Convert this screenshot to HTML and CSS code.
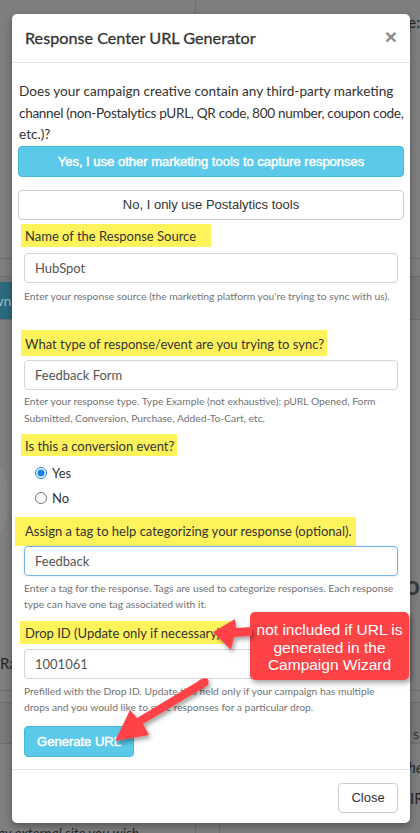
FILE: index.html
```html
<!DOCTYPE html>
<html lang="en">
<head>
<meta charset="utf-8">
<title>Response Center URL Generator</title>
<link rel="stylesheet" href="styles.css">
</head>
<body>
<div class="page">
  <div class="bg-row bg-r1">
    <div class="bg-col-left"></div>
    <div class="bg-col-right"><span class="bg-re">Re:</span></div>
  </div>
  <div class="bg-row bg-r2"></div>
  <div class="bg-row bg-r3"><span class="bg-btn">Down</span></div>
  <div class="bg-row bg-r4">
    <div class="bg-circle"></div>
    <div class="bg-o">o</div>
  </div>
  <div class="bg-row bg-r5"><span class="bg-ra">Ra</span></div>
  <div class="bg-row bg-r7"><span class="bg-s">s</span></div>
  <div class="bg-row bg-r8"><span class="bg-he">he</span></div>
  <div class="bg-row bg-r9"><span class="bg-ir">IR</span></div>
  <div class="bg-row bg-r10"><span class="bg-ext">say external site you wish</span><span class="bg-vline1"></span><span class="bg-vline2"></span></div>

  <div class="modal">
    <div class="modal-header">
      <h4 class="modal-title">Response Center URL Generator</h4>
      <span class="modal-close">&times;</span>
    </div>
    <div class="modal-body">
      <p class="intro"><span class="intro-line">Does your campaign creative contain any third-party marketing</span> <span class="intro-line intro-tight">channel (non-Postalytics pURL, QR code, 800 number, coupon code,</span> <span class="intro-line">etc.)?</span></p>
      <button class="btn btn-info btn-block btn-yes">Yes, I use other marketing tools to capture responses</button>
      <button class="btn btn-default btn-block btn-no">No, I only use Postalytics tools</button>

      <div class="form">
        <div class="label-row lr1"><span class="hl hl1">Name of the Response Source</span></div>
        <div class="input i1">HubSpot</div>
        <div class="help h1">Enter your response source (the marketing platform you're trying to sync with us).</div>

        <div class="label-row lr2"><span class="hl hl2">What type of response/event are you trying to sync?</span></div>
        <div class="input i2">Feedback Form</div>
        <div class="help h2">Enter your response type. Type Example (not exhaustive): pURL Opened, Form Submitted, Conversion, Purchase, Added-To-Cart, etc.</div>

        <div class="label-row lr3"><span class="hl hl3">Is this a conversion event?</span></div>
        <div class="radios">
          <label class="radio"><input type="radio" name="conv" checked> <span>Yes</span></label>
          <label class="radio"><input type="radio" name="conv"> <span>No</span></label>
        </div>

        <div class="label-row lr4"><span class="hl hl4">Assign a tag to help categorizing your response (optional).</span></div>
        <div class="input i3 focused">Feedback</div>
        <div class="help h3">Enter a tag for the response. Tags are used to categorize responses. Each response type can have one tag associated with it.</div>

        <div class="label-row lr5"><span class="hl hl5">Drop ID (Update only if necessary):</span></div>
        <div class="input i4">1001061</div>
        <div class="help h4">Prefilled with the Drop ID. Update this field only if your campaign has multiple drops and you would like to sync responses for a particular drop.</div>

        <button class="btn btn-info btn-generate">Generate URL</button>
      </div>
    </div>
    <div class="modal-footer">
      <button class="btn btn-default btn-close">Close</button>
    </div>
  </div>

  <div class="callout">not included if URL is generated in the Campaign Wizard</div>
  <svg class="arrows" width="420" height="833" viewBox="0 0 420 833" xmlns="http://www.w3.org/2000/svg">
    <defs>
      <filter id="sh" x="-30%" y="-30%" width="160%" height="160%">
        <feDropShadow dx="2" dy="3" stdDeviation="2" flood-color="#000" flood-opacity="0.35"/>
      </filter>
    </defs>
    <g fill="#fe4347" filter="url(#sh)">
      <path d="M252 627 L236 628 L235 619 L213 632 L231 650 L234 637 L252 636 Z"/>
      <path d="M208 679 C210 683 207 687 203 688 L143 724 L149 735 L115 741 L130 710 L137 718 L197 682 C200 679 205 677 208 679 Z"/>
    </g>
  </svg>
</div>
</body>
</html>
```

FILE: styles.css
```css
* { box-sizing: border-box; }
html, body { margin: 0; padding: 0; }
body {
  width: 420px;
  height: 833px;
  overflow: hidden;
  background: #7f7f7f;
  font-family: Lato, "Open Sans", sans-serif;
  color: #333;
}
.page {
  position: relative;
  width: 420px;
  height: 833px;
  overflow: hidden;
  background: #7f7f7f;
}

/* dimmed background page */
.bg-row { position: relative; width: 420px; display: flex; }
.bg-r1 { height: 258px; }
.bg-col-left { width: 207px; border-right: 1px solid #6f6f6f; }
.bg-col-right { flex: 1; padding: 12px 0 0 203px; }
.bg-re { font-size: 15px; color: #262626; }
.bg-r2 { height: 19px; border-top: 1px solid #6d6d6d; border-bottom: 1px solid #6d6d6d; }
.bg-r3 { height: 43px; background: #787878; border-bottom: 1px solid #6d6d6d; align-items: flex-end; }
.bg-btn {
  display: block; margin-left: -26px; width: 38px; height: 37px;
  background: #2c6b7e; color: #9fbcc6;
  font-size: 14px; line-height: 37px; text-align: right; padding-right: 1px;
  overflow: hidden; white-space: nowrap;
}
.bg-r4 { height: 370px; }
.bg-circle {
  width: 140px; height: 140px; border-radius: 50%;
  background: #858585; margin: 110px 0 0 -128px;
}
.bg-o { margin: 250px 0 0 396px; font-size: 26px; font-weight: 700; color: #3b3b3b; line-height: 30px; }
.bg-r5 { height: 13px; border-top: 1px solid #6d6d6d; border-bottom: 1px solid #6d6d6d; }
.bg-ra { position: absolute; left: 0; top: -37px; font-size: 15px; color: #262626; }
.bg-r7 { height: 41px; background: #7a7a7a; border-bottom: 1px solid #6d6d6d; }
.bg-s { margin: 22px 0 0 413px; font-size: 14px; color: #333; }
.bg-r8 { height: 45px; }
.bg-he { margin: 14px 0 0 408px; font-size: 15px; font-style: italic; color: #262626; }
.bg-r9 { height: 36px; }
.bg-ir { margin: 0 0 0 410px; font-size: 15px; color: #262626; }
.bg-r10 { height: 30px; }
.bg-ext { margin: 0 0 0 -8px; font-size: 14px; font-style: italic; color: #262626; line-height: 16px; }
.bg-vline1 { position: absolute; left: 195px; top: 0; height: 30px; border-left: 1px solid #6d6d6d; }
.bg-vline2 { position: absolute; left: 219px; top: 0; height: 30px; border-left: 1px solid #6d6d6d; }

/* modal */
.modal {
  position: absolute;
  left: 12px;
  top: 14px;
  width: 398px;
  height: 809px;
  background: #fff;
  border-radius: 5px;
  box-shadow: 0 3px 9px rgba(0,0,0,0.35);
  display: flex;
  flex-direction: column;
}
.modal-header {
  height: 49px;
  flex: none;
  border-bottom: 1px solid #e5e5e5;
  display: flex;
  align-items: center;
  justify-content: space-between;
  padding: 0 13px 0 13px;
}
.modal-title {
  margin: 0;
  font-size: 16.2px;
  font-weight: 400;
  color: #333;
  -webkit-text-stroke: 0.3px #333;
  margin-top: -2px;
}
.modal-close {
  font-family: "Liberation Sans", Arial, sans-serif;
  font-size: 21px;
  font-weight: 700;
  color: #8c8c8c;
  line-height: 1;
  margin-top: -3px;
}
.modal-body {
  flex: none;
  padding: 18px 6px 12px 6px;
  display: flex;
  flex-direction: column;
}
.intro {
  margin: 0 0 0 1px;
  font-size: 13.6px;
  line-height: 21.5px;
  color: #333;
  white-space: nowrap;
}
.intro-line { display: block; }
.intro-tight { letter-spacing: -0.33px; }
.btn {
  font-family: "Liberation Sans", Arial, sans-serif;
  font-size: 13px;
  border-radius: 4px;
  border: 1px solid #ccc;
  background: #fff;
  color: #333;
  padding: 0 12px;
  cursor: pointer;
  white-space: nowrap;
}
.btn-info {
  background: #5bc9ea;
  border-color: #46b8da;
  color: #fff;
  font-weight: 400;
  -webkit-text-stroke: 0.45px #fff;
}
.btn-block { width: 100%; display: block; }
.btn-yes { height: 31px; }
.btn-no { height: 30px; margin-top: 13px; }

.form {
  display: flex;
  flex-direction: column;
  padding: 0 6px;
}
.label-row { display: flex; margin-left: -3px; }
.hl {
  display: inline-block;
  background: #fff35b;
  font-size: 13px;
  color: #333;
  padding: 0 8px 0 4px;
  white-space: nowrap;
}
.lr1 { margin-top: 4px; }
.hl1 { height: 23px; line-height: 25px; padding-right: 15px; }
.lr2 { margin-top: 26px; }
.hl2 { height: 26px; line-height: 28px; padding-right: 3px; }
.lr3 { margin-top: 7px; }
.hl3 { height: 22px; line-height: 24px; padding-right: 3px; }
.lr4 { margin-top: 6px; margin-left: -9px; }
.hl4 { height: 29px; line-height: 28px; padding-left: 10px; padding-right: 4px; }
.lr5 { margin-top: 9px; margin-left: -4px; }
.hl5 { height: 23px; line-height: 25px; padding-left: 5px; }

.input {
  height: 30px;
  border: 1px solid #d4d4d4;
  border-radius: 4px;
  font-size: 13px;
  line-height: 28px;
  padding: 0 10px;
  color: #555;
}
.input.focused { border-color: #73b4ea; box-shadow: 0 0 2px rgba(102,175,233,0.5); }
.i1 { margin-top: 6px; }
.i2 { margin-top: 4px; }
.i3 { margin-top: 0; }
.i4 { margin-top: 5px; }

.help {
  font-size: 10.3px;
  line-height: 16px;
  color: #737373;
  margin-top: 5px;
}
.h2 { line-height: 17px; margin-top: 3px; }
.h3 { margin-top: 4px; }
.h4 { margin-top: 4px; }

.radios { display: flex; flex-direction: column; margin-top: 5px; padding-left: 11px; }
.radio { display: flex; align-items: center; height: 25px; font-size: 13px; color: #333; }
.radio input { margin: 0 5px 0 0; width: 12px; height: 12px; accent-color: #1a7fe8; }

.btn-generate {
  margin-top: 11px;
  width: 110px;
  height: 31px;
  align-self: flex-start;
}

.modal-footer {
  border-top: 1px solid #e5e5e5;
  flex: 1;
  display: flex;
  justify-content: flex-end;
  align-items: flex-start;
  padding: 13px 12px 0 0;
}
.btn-close { height: 30px; width: 60px; padding: 0; }

/* annotations */
.callout {
  position: absolute;
  left: 250px;
  top: 612px;
  width: 159px;
  height: 68px;
  background: #fe4347;
  border-radius: 5px;
  box-shadow: 2px 3px 5px rgba(0,0,0,0.35);
  color: #fff;
  font-family: "Liberation Sans", Arial, sans-serif;
  font-size: 15.5px;
  line-height: 17.5px;
  text-align: center;
  padding: 9px 0 0;
}
.arrows { position: absolute; left: 0; top: 0; pointer-events: none; }
```
